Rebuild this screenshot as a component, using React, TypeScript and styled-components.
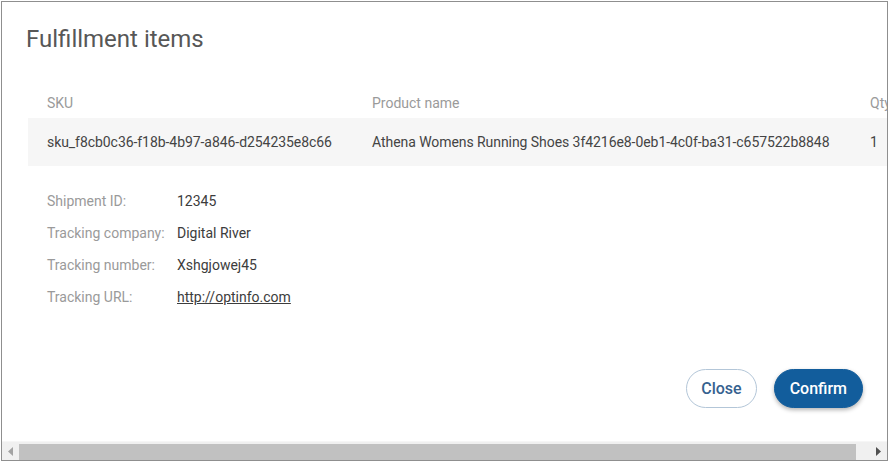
import styled, { createGlobalStyle } from "styled-components";

const GlobalStyle = createGlobalStyle`
  html, body {
    margin: 0;
    padding: 0;
    background: #ffffff;
  }
  body {
    font-family: Roboto, "Liberation Sans", Arial, sans-serif;
  }
`;

const Frame = styled.div`
  box-sizing: border-box;
  margin: 1px 0 0 1px;
  width: 887px;
  height: 460px;
  border: 1px solid #8f8f8f;
  background: #ffffff;
  display: flex;
  flex-direction: column;
`;

const Viewport = styled.div`
  flex: 1;
  overflow: hidden;
`;

const ScrollBar = styled.div`
  height: 18px;
  display: flex;
  background: #f0f0f0;
  border-top: 1px solid #f6f6f6;
`;

const ArrowButton = styled.div`
  width: 17px;
  display: flex;
  align-items: center;
  justify-content: center;
`;

const Track = styled.div`
  flex: 1;
  padding-top: 2px;
  display: flex;
`;

const Thumb = styled.div`
  height: 100%;
  background: #c1c1c1;
`;

const Content = styled.div`
  width: 912px;
  display: flex;
  flex-direction: column;
`;

const Title = styled.h2`
  margin: 0;
  padding: 21px 24px 0;
  font-size: 24px;
  font-weight: 400;
  line-height: 32px;
  color: #575757;
`;

const Table = styled.div`
  margin: 33px 0 0 26px;
  display: grid;
  grid-template-columns: 325px 498px 63px;
`;

const HeadCell = styled.div`
  height: 30px;
  padding-left: 19px;
  display: flex;
  align-items: center;
  font-size: 14px;
  color: #9a9a9a;
  white-space: nowrap;
`;

const Cell = styled.div`
  height: 48px;
  padding-left: 19px;
  display: flex;
  align-items: center;
  font-size: 14px;
  letter-spacing: -0.06px;
  color: #444444;
  background: #f6f6f6;
  white-space: nowrap;
`;

const Details = styled.dl`
  margin: 19px 0 0 45px;
  display: grid;
  grid-template-columns: 130px auto;
  grid-auto-rows: 32px;
  align-items: center;
  font-size: 14px;
`;

const Label = styled.dt`
  color: #9a9a9a;
`;

const Value = styled.dd`
  margin: 0;
  color: #3c3c3c;
`;

const Link = styled.a`
  color: #3c3c3c;
  text-decoration: underline;
`;

const Footer = styled.div`
  margin-top: 56px;
  width: 885px;
  box-sizing: border-box;
  padding-right: 24px;
  display: flex;
  justify-content: flex-end;
  gap: 17px;
`;

const Button = styled.button<{ $primary?: boolean }>`
  height: 39px;
  padding: 0 ${(p) => (p.$primary ? "15px" : "14px")};
  border-radius: 20px;
  font-family: Roboto, "Liberation Sans", Arial, sans-serif;
  font-size: 16px;
  font-weight: 500;
  cursor: pointer;
  border: 1px solid ${(p) => (p.$primary ? "#125d9c" : "#b3c6d8")};
  background: ${(p) => (p.$primary ? "#125d9c" : "#ffffff")};
  color: ${(p) => (p.$primary ? "#ffffff" : "#36628f")};
  box-shadow: ${(p) => (p.$primary ? "0 2px 4px rgba(0, 0, 0, 0.3)" : "none")};
`;

const Arrow = ({ dir, color }: { dir: "left" | "right"; color: string }) => (
  <svg width="5" height="9" viewBox="0 0 5 9">
    <polygon
      points={dir === "left" ? "5,0 0,4.5 5,9" : "0,0 5,4.5 0,9"}
      fill={color}
    />
  </svg>
);

const items = [
  {
    sku: "sku_f8cb0c36-f18b-4b97-a846-d254235e8c66",
    name: "Athena Womens Running Shoes 3f4216e8-0eb1-4c0f-ba31-c657522b8848",
    qty: 1,
  },
];

// visible part of the scrolled content
const thumbRatio = 885 / 900;

const App = () => {
  return (
    <>
      <GlobalStyle />
      <Frame>
        <Viewport>
          <Content>
            <Title>Fulfillment items</Title>
            <Table>
              <HeadCell>SKU</HeadCell>
              <HeadCell>Product name</HeadCell>
              <HeadCell>Qty</HeadCell>
              {items.map((item) => (
                <>
                  <Cell key={item.sku + "s"}>{item.sku}</Cell>
                  <Cell key={item.sku + "n"}>{item.name}</Cell>
                  <Cell key={item.sku + "q"}>{item.qty}</Cell>
                </>
              ))}
            </Table>
            <Details>
              <Label>Shipment ID:</Label>
              <Value>12345</Value>
              <Label>Tracking company:</Label>
              <Value>Digital River</Value>
              <Label>Tracking number:</Label>
              <Value>Xshgjowej45</Value>
              <Label>Tracking URL:</Label>
              <Value>
                <Link href="#">http://optinfo.com</Link>
              </Value>
            </Details>
            <Footer>
              <Button>Close</Button>
              <Button $primary>Confirm</Button>
            </Footer>
          </Content>
        </Viewport>
        <ScrollBar>
          <ArrowButton>
            <Arrow dir="left" color="#a3a3a3" />
          </ArrowButton>
          <Track>
            <Thumb style={{ width: `${thumbRatio * 100}%` }} />
          </Track>
          <ArrowButton>
            <Arrow dir="right" color="#505050" />
          </ArrowButton>
        </ScrollBar>
      </Frame>
    </>
  );
};

export default App;
